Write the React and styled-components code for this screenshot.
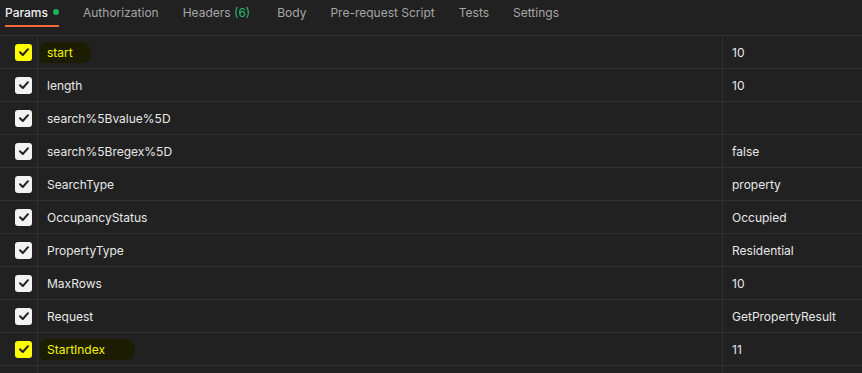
import React from "react";
import styled, { createGlobalStyle } from "styled-components";

const GlobalStyle = createGlobalStyle`
  html, body {
    margin: 0;
    padding: 0;
    background: #212121;
    overflow: hidden;
  }
  body {
    font-family: Inter, "Noto Sans", sans-serif;
  }
`;

const Page = styled.div`
  width: 862px;
  height: 373px;
  background: #212121;
  overflow: hidden;
`;

const TabBar = styled.div`
  display: flex;
  align-items: flex-start;
  gap: 24px;
  height: 36px;
  padding-left: 5px;
  border-bottom: 1px solid #303030;
  box-sizing: border-box;
`;

const Tab = styled.div`
  display: flex;
  align-items: center;
  gap: 5px;
  height: 27px;
  box-sizing: border-box;
  padding-bottom: 1px;
  font-size: 12px;
  margin-right: ${(p) => p.$extra || 0}px;
  color: ${(p) => (p.$active ? "#f0f0f0" : "#a6a6a6")};
  font-weight: ${(p) => (p.$active ? 500 : 400)};
  border-bottom: 2px solid ${(p) => (p.$active ? "#f26b3a" : "transparent")};
`;

const Dot = styled.span`
  width: 6px;
  height: 6px;
  border-radius: 50%;
  background: #1fb35c;
`;

const Count = styled.span`
  color: #2eb872;
`;

const Row = styled.div`
  display: grid;
  grid-template-columns: 38px 685px 1fr;
  height: 33px;
  border-bottom: 1px solid #303030;
  box-sizing: border-box;
`;

const Cell = styled.div`
  display: flex;
  align-items: center;
  padding-left: ${(p) => (p.$first ? "0" : "9px")};
  justify-content: ${(p) => (p.$first ? "flex-end" : "flex-start")};
  padding-right: ${(p) => (p.$first ? "5px" : "0")};
  border-right: ${(p) => (p.$last ? "none" : "1px solid #303030")};
  font-size: 12px;
  color: #e8e8e8;
  white-space: nowrap;
`;

const Box = styled.span`
  width: 17px;
  height: 17px;
  border-radius: 3px;
  background: ${(p) => (p.$marked ? "#ffff00" : "#f2f2f2")};
  display: flex;
  align-items: center;
  justify-content: center;
`;

const Marked = styled.span`
  display: inline-block;
  color: #f5f500;
  background: #1c1c00;
  padding: 3px ${(p) => p.$pad || 10}px 3px 7px;
  margin-left: -7px;
  border-radius: 6px 10px 8px 4px;
`;

const tabs = ["Authorization", "Headers", "Body", "Pre-request Script", "Tests", "Settings"];

const params = [
  { key: "start", value: "10", marked: true, pad: 18 },
  { key: "length", value: "10" },
  { key: "search%5Bvalue%5D", value: "" },
  { key: "search%5Bregex%5D", value: "false" },
  { key: "SearchType", value: "property" },
  { key: "OccupancyStatus", value: "Occupied" },
  { key: "PropertyType", value: "Residential" },
  { key: "MaxRows", value: "10" },
  { key: "Request", value: "GetPropertyResult" },
  { key: "StartIndex", value: "11", marked: true, pad: 30 },
];

function Check() {
  return (
    <svg width="12" height="12" viewBox="0 0 12 12">
      <polyline points="2,6.3 4.8,9 10,3.2" fill="none" stroke="#222" strokeWidth="2" strokeLinecap="round" strokeLinejoin="round" />
    </svg>
  );
}

export default function App() {
  return (
    <Page>
      <GlobalStyle />
      <TabBar>
        <Tab $active>
          Params <Dot />
        </Tab>
        {tabs.map((t) => (
          <Tab key={t} $extra={t === "Headers" ? 3 : 0}>
            {t === "Headers" ? (
              <span>
                Headers <Count>(6)</Count>
              </span>
            ) : (
              t
            )}
          </Tab>
        ))}
      </TabBar>
      {params.map((p) => (
        <Row key={p.key}>
          <Cell $first>
            <Box $marked={p.marked}>
              <Check />
            </Box>
          </Cell>
          <Cell>{p.marked ? <Marked $pad={p.pad}>{p.key}</Marked> : p.key}</Cell>
          <Cell $last>{p.value}</Cell>
        </Row>
      ))}
      <Row>
        <Cell $first />
        <Cell />
        <Cell $last />
      </Row>
    </Page>
  );
}
